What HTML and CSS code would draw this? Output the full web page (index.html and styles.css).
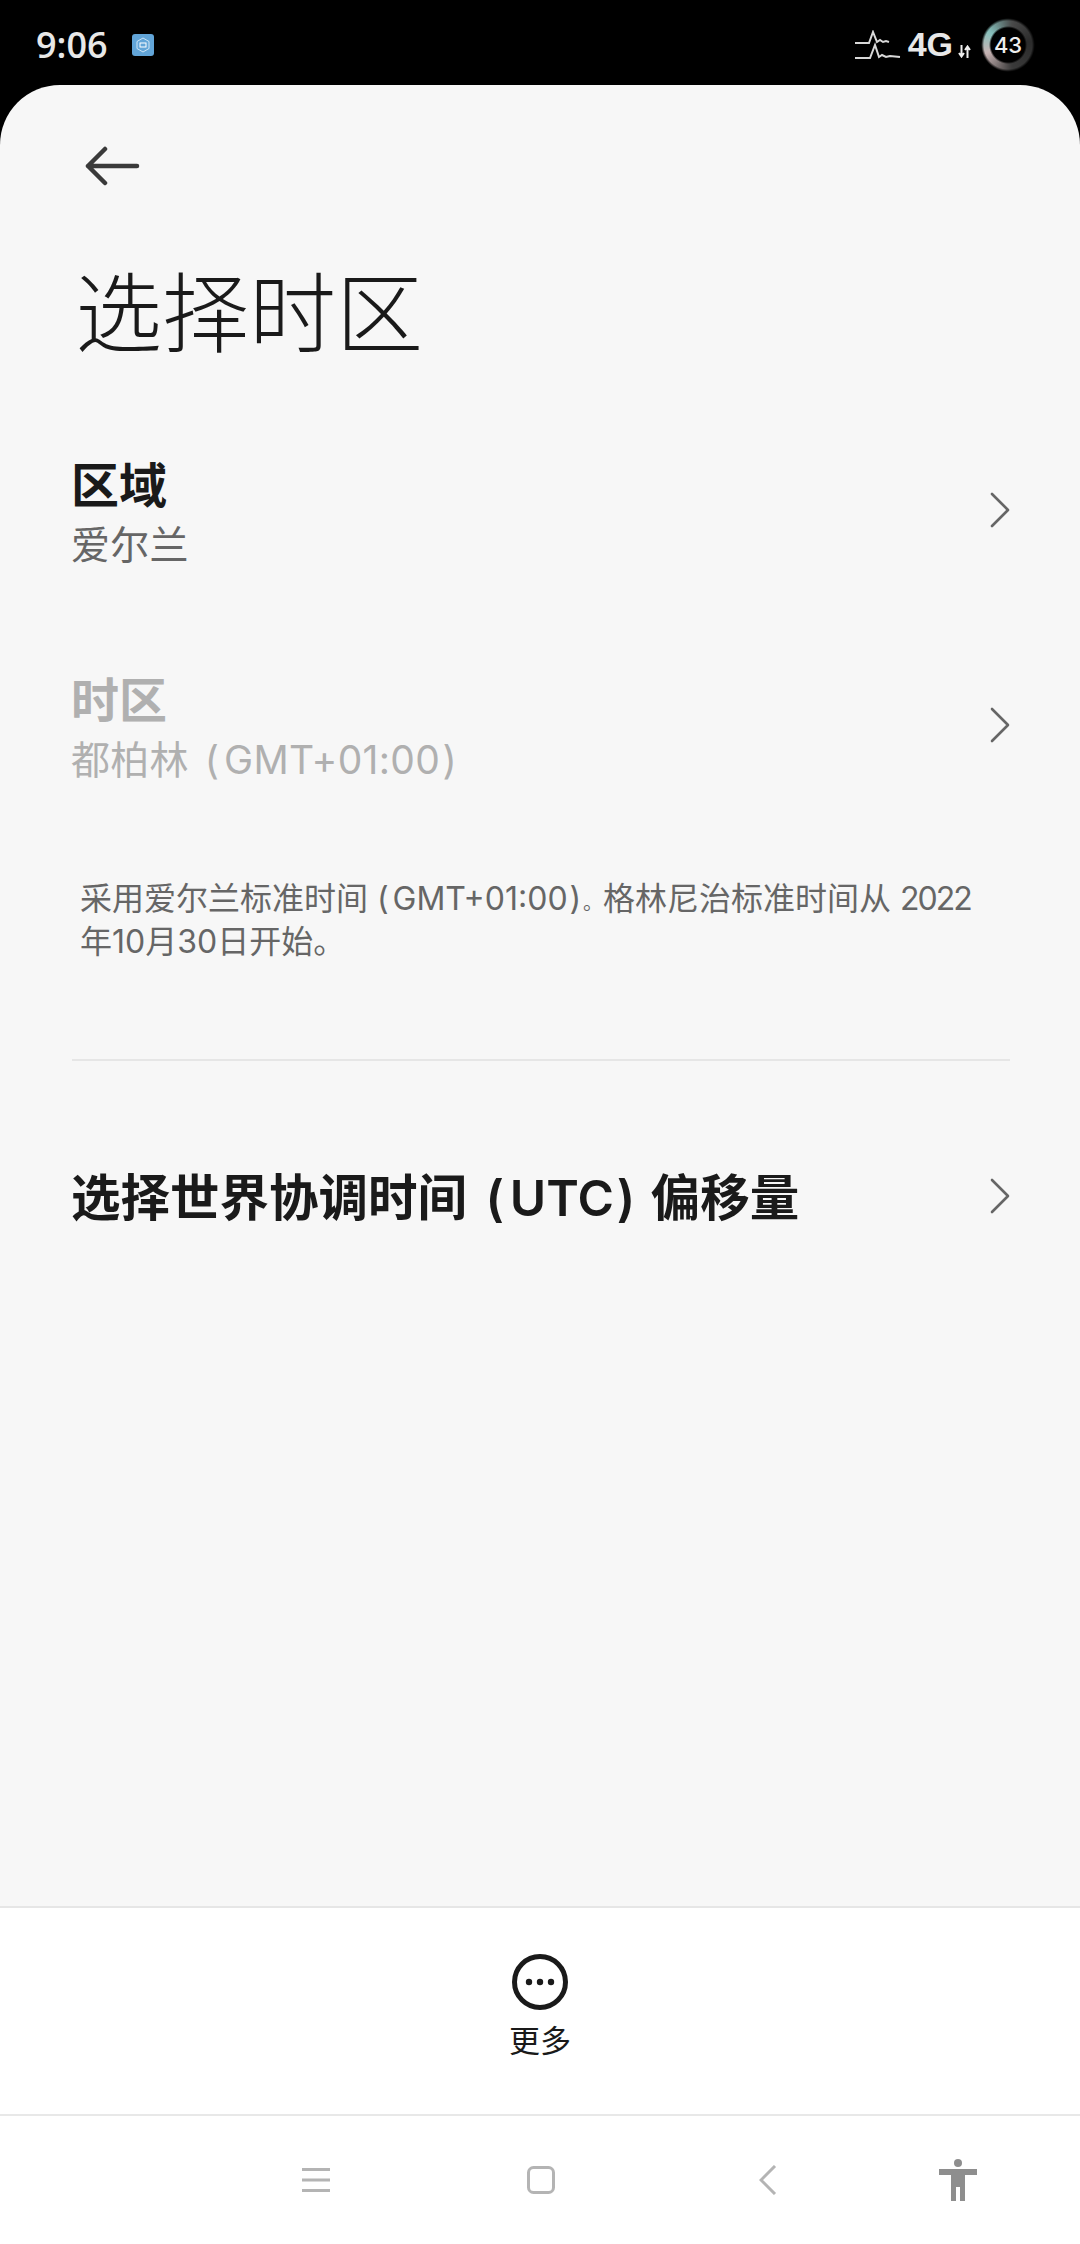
FILE: index.html
```html
<!DOCTYPE html>
<html lang="zh-CN">
<head>
<meta charset="utf-8">
<title>选择时区</title>
<link rel="stylesheet" href="styles.css">
</head>
<body>
<div class="screen">
  <header class="status">
    <div class="status-left">
      <span class="time">9:06</span>
      <svg class="app-icon" width="22" height="22" viewBox="0 0 22 22"><rect width="22" height="22" rx="3" fill="#62a5d8"/><path d="M11 4l6 3.500v7L11 18l-6-3.500v-7z" fill="none" stroke="#cfe6f7" stroke-width="1"/><rect x="8" y="9" width="6" height="4" fill="none" stroke="#fff" stroke-width="1"/></svg>
    </div>
    <div class="status-right">
      <svg class="signal" width="46" height="30" viewBox="0 0 46 30"><path d="M0 13h14l4-11 4 10 3-2 3 2 3-1 3 1M0 28h15l5-13 4 12 3-2 4 2 4-1 10 1" fill="none" stroke="#d8d8d8" stroke-width="2"/></svg>
      <span class="net">4G</span>
      <svg class="updown" width="13" height="13" viewBox="0 0 13 13"><path d="M3.500 0v11M1 8l2.500 3.500L6 8M9.500 13V2M7 5l2.500-3.500L12 5" fill="none" stroke="#eee" stroke-width="2"/></svg>
      <span class="battery">43</span>
    </div>
  </header>

  <main class="panel">
    <button class="back" aria-label="返回">
      <svg width="56" height="40" viewBox="0 0 56 40"><path d="M53 20H4M21 3L4 20l17 17" fill="none" stroke="#3a3a3a" stroke-width="4.500" stroke-linecap="round" stroke-linejoin="round"/></svg>
    </button>
    <h1 class="title">选择时区</h1>

    <section class="row row-region">
      <div class="row-text">
        <div class="row-title">区域</div>
        <div class="row-sub">爱尔兰</div>
      </div>
      <svg class="chev" width="20" height="36" viewBox="0 0 20 36"><path d="M2 2l16 16L2 34" fill="none" stroke="#666" stroke-width="2.600" stroke-linecap="round" stroke-linejoin="round"/></svg>
    </section>

    <section class="row row-zone disabled">
      <div class="row-text">
        <div class="row-title">时区</div>
        <div class="row-sub">都柏林 <span class="po">(</span>GMT+01:00<span class="pc">)</span></div>
      </div>
      <svg class="chev" width="20" height="36" viewBox="0 0 20 36"><path d="M2 2l16 16L2 34" fill="none" stroke="#666" stroke-width="2.600" stroke-linecap="round" stroke-linejoin="round"/></svg>
    </section>

    <div class="note">
      <div class="note-line">采用爱尔兰标准时间 <span class="po">(</span>GMT+01:00<span class="pc">)</span><span class="stop">。</span>格林尼治标准时间从 <span class="year">2022</span></div>
      <div class="note-line">年10月30日开始。</div>
    </div>

    <hr class="divider">

    <section class="row row-utc">
      <div class="row-title utc-title">选择世界协调时间 <span class="po">(</span>UTC<span class="pc">)</span> 偏移量</div>
      <svg class="chev" width="20" height="36" viewBox="0 0 20 36"><path d="M2 2l16 16L2 34" fill="none" stroke="#666" stroke-width="2.600" stroke-linecap="round" stroke-linejoin="round"/></svg>
    </section>
  </main>

  <footer class="more-bar">
    <svg width="56" height="56" viewBox="0 0 56 56"><circle cx="28" cy="28" r="25.500" fill="none" stroke="#1a1a1a" stroke-width="5"/><circle cx="17" cy="28" r="3.200" fill="#1a1a1a"/><circle cx="28" cy="28" r="3.200" fill="#1a1a1a"/><circle cx="39" cy="28" r="3.200" fill="#1a1a1a"/></svg>
    <span class="more-label">更多</span>
  </footer>

  <nav class="navbar">
    <svg width="28" height="24" viewBox="0 0 28 24"><path d="M0 1.500h28M0 12h28M0 22.500h28" stroke="#b4b4b4" stroke-width="3"/></svg>
    <svg width="28" height="28" viewBox="0 0 28 28"><rect x="1.500" y="1.500" width="25" height="25" rx="5" fill="none" stroke="#b4b4b4" stroke-width="3"/></svg>
    <svg width="18" height="30" viewBox="0 0 18 30"><path d="M16 1L2 15l14 14" fill="none" stroke="#b4b4b4" stroke-width="3"/></svg>
    <svg width="38" height="42" viewBox="0 0 38 42"><circle cx="19" cy="4" r="4" fill="#8e8e8e"/><path d="M0 10h38v6H26v26h-5V28h-4v14h-5V16H0z" fill="#8e8e8e"/></svg>
  </nav>
</div>
</body>
</html>
```
FILE: styles.css
```css
* { box-sizing: border-box; }
html, body { margin: 0; padding: 0; }
body { background: #000; font-family: Inter, "Noto Sans CJK SC", "Noto Sans", sans-serif; }
.screen { width: 1080px; height: 2244px; display: flex; flex-direction: column; background: #000; overflow: hidden; }

.status { height: 85px; flex: none; display: flex; justify-content: space-between; align-items: center; padding: 4px 47px 0 36px; color: #e8e8e8; }
.status-left, .status-right { display: flex; align-items: center; }
.time { font-family: "Open Sans", sans-serif; font-weight: 600; font-size: 36px; line-height: 1; }
.app-icon { margin-left: 24px; }
.signal { margin-right: 7px; }
.net { font-family: "Liberation Sans", sans-serif; font-weight: 700; font-size: 34px; }
.updown { margin: 14px 0 0 5px; }
.battery { position: relative; width: 50px; height: 50px; margin-left: 12px; display: flex; align-items: center; justify-content: center; font-family: Inter, sans-serif; font-weight: 500; font-size: 22px; color: #eee; }
.battery::before { content: ""; position: absolute; inset: -2px; border-radius: 50%; background: conic-gradient(from 250deg, #c8b4b4, #86c0bc 55deg, #4a4a4a 120deg, #2c2c2c 190deg, #3a3a3a 280deg, #c8b4b4); -webkit-mask: radial-gradient(circle, transparent 17px, #000 19px, #000 24px, transparent 27px); mask: radial-gradient(circle, transparent 17px, #000 19px, #000 24px, transparent 27px); filter: blur(.8px); }

.panel { flex: 1; background: #f7f7f7; border-radius: 60px 60px 0 0; padding: 61px 70px 0 71px; display: flex; flex-direction: column; }
.back { width: 56px; height: 40px; padding: 0; margin-left: 13px; border: 0; background: none; display: block; flex: none; }
.title { margin: 67px 0 0 4px; font-size: 87px; line-height: 124px; font-weight: 300; color: #1a1a1a; }

.row { display: flex; justify-content: space-between; align-items: center; }
.chev { margin-bottom: 6px; flex: none; }
.row-title { font-size: 48px; line-height: 65px; font-weight: 700; color: #1a1a1a; }
.row-sub { font-size: 39px; line-height: 54px; color: #666; letter-spacing: .3px; }
.row-region { margin-top: 76px; }
.row-zone { margin-top: 96px; }
.disabled .row-title, .disabled .row-sub { color: #b0b0b0; }
.note { margin: 90px 0 0 9px; font-size: 32px; line-height: 43px; color: #666; }
.note-line { white-space: nowrap; }
.note .po { margin-left: 0; }
.stop { font-size: .62em; line-height: 0; }
.year { letter-spacing: -.06em; }
.divider { border: 0; height: 2px; background: #e6e6e6; margin: 96px 0 0 1px; width: 938px; flex: none; }
.row-utc { margin-top: 105px; }
.utc-title { font-size: 49.500px; font-weight: 600; }
.po { margin-left: .12em; margin-right: .12em; }
.pc { margin-left: .06em; margin-right: .06em; }

.more-bar { height: 208px; flex: none; background: #fff; border-top: 2px solid #e6e6e6; display: flex; flex-direction: column; align-items: center; padding-top: 46px; }
.more-label { font-size: 31px; line-height: 44px; margin-top: 9px; color: #1a1a1a; }

.navbar { height: 130px; flex: none; background: #fff; border-top: 2px solid #e8e8e8; display: flex; align-items: center; padding-left: 302px; }
.navbar svg:nth-child(2) { margin-left: 197px; }
.navbar svg:nth-child(3) { margin-left: 204px; }
.navbar svg:nth-child(4) { margin-left: 162px; }
```
